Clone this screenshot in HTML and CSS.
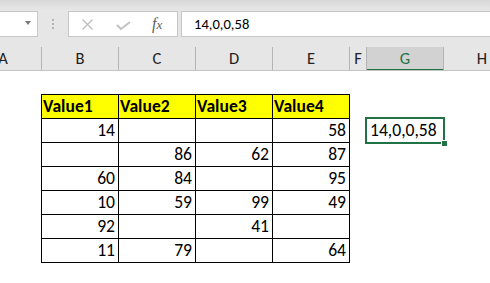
FILE: index.html
```html
<!DOCTYPE html>
<html lang="en">
<head>
  <meta charset="UTF-8">
  <title>Sheet</title>
  <link rel="stylesheet" href="styles.css">
</head>
<body>
  <!-- formula bar -->
  <div class="bar">
    <div class="namebox"><span class="arrow"></span></div>
    <div class="grip"><i></i><i></i><i></i></div>
    <div class="fxbox">
      <svg class="cancel" width="11" height="11" viewBox="0 0 11 11">
        <path d="M0.5 0.5L10.5 10.5M10.5 0.5L0.5 10.5" stroke="#bdbdbd" stroke-width="1.3" fill="none"/>
      </svg>
      <svg class="ok" width="15" height="9" viewBox="0 0 15 9">
        <path d="M1 4L5 8L14 1" stroke="#c2c2c2" stroke-width="2" fill="none"/>
      </svg>
      <span class="fx">f<small>x</small></span>
    </div>
    <div class="formula">14,0,0,58</div>
  </div>

  <!-- column headers -->
  <div class="cols">
    <div class="colrow">
      <div class="col">A</div>
      <div class="col">B</div>
      <div class="col">C</div>
      <div class="col">D</div>
      <div class="col">E</div>
      <div class="col narrow">F</div>
      <div class="col on">G</div>
      <div class="col">H</div>
    </div>
  </div>

  <!-- cells -->
  <div class="sheet">
    <div class="grid">
      <div class="table">
        <div class="c h">Value1</div>
        <div class="c h">Value2</div>
        <div class="c h">Value3</div>
        <div class="c h">Value4</div>

        <div class="c">14</div>
        <div class="c"></div>
        <div class="c"></div>
        <div class="c">58</div>

        <div class="c"></div>
        <div class="c">86</div>
        <div class="c">62</div>
        <div class="c">87</div>

        <div class="c">60</div>
        <div class="c">84</div>
        <div class="c"></div>
        <div class="c">95</div>

        <div class="c">10</div>
        <div class="c">59</div>
        <div class="c">99</div>
        <div class="c">49</div>

        <div class="c">92</div>
        <div class="c"></div>
        <div class="c">41</div>
        <div class="c"></div>

        <div class="c">11</div>
        <div class="c">79</div>
        <div class="c"></div>
        <div class="c">64</div>
      </div>
      <div class="sel">14,0,0,58<span class="handle"></span></div>
    </div>
  </div>
</body>
</html>
```

FILE: styles.css
```css
* {
  box-sizing: border-box;
}

body {
  margin: 0;
  width: 490px;
  height: 283px;
  overflow: hidden;
  background: #fff;
  font-family: Carlito, Lato, "Liberation Sans", sans-serif;
  color: #000;
}

/* formula bar */
.bar {
  display: flex;
  align-items: flex-start;
  height: 46px;
  padding-top: 11px;
  overflow: hidden;
  background: linear-gradient(#d8d8d8, #e6e6e6 10px);
}

.namebox {
  width: 38px;
  height: 26px;
  padding-right: 6px;
  display: flex;
  align-items: center;
  justify-content: flex-end;
  background: #fff;
  border: 1px solid #c6c6c6;
  border-left: 0;
  flex: none;
}

.arrow {
  width: 0;
  height: 0;
  margin-top: -2px;
  border-left: 3.5px solid transparent;
  border-right: 3.5px solid transparent;
  border-top: 4px solid #7a7a7a;
}

.grip {
  display: flex;
  flex-direction: column;
  gap: 2px;
  margin: 8px 0 0 14px;
  flex: none;
}

.grip i {
  width: 2px;
  height: 2px;
  background: #b3b3b3;
}

.fxbox {
  display: flex;
  align-items: center;
  width: 110px;
  height: 26px;
  margin-left: 14px;
  background: #fff;
  border: 1px solid #c6c6c6;
  flex: none;
}

.cancel {
  margin-left: 13px;
}

.ok {
  margin-left: 23px;
  margin-top: 2px;
}

.fx {
  margin-left: 21px;
  font-family: "Liberation Serif", serif;
  font-style: italic;
  font-size: 16px;
  color: #606060;
}

.fx small {
  font-size: 13px;
}

.formula {
  flex: 1;
  height: 26px;
  margin-left: 3px;
  padding-left: 12px;
  background: #fff;
  border: 1px solid #c6c6c6;
  border-right: 0;
  font-size: 14.6px;
  line-height: 24px;
}

/* column headers */
.cols {
  overflow: hidden;
  padding-top: 1px;
  background: #e6e6e6;
  border-bottom: 1px solid #c4c4c4;
}

.colrow {
  display: flex;
  align-items: flex-start;
  height: 23px;
  margin-left: -35px;
}

.col {
  width: 77px;
  height: 23px;
  flex: none;
  border-right: 1px solid #b4b4b4;
  text-align: center;
  line-height: 23px;
  font-size: 16.5px;
  color: #222;
}

.col.narrow {
  width: 17px;
}

.col.on {
  height: 24px;
  background: #d2d2d2;
  border-bottom: 2px solid #217346;
  color: #217346;
  line-height: 22px;
}

/* sheet */
.sheet {
  overflow: hidden;
  height: 212px;
}

.grid {
  display: grid;
  grid-template-columns: repeat(5, 77px) 17px 77px 77px;
  grid-template-rows: 23px repeat(8, 24px);
  margin-left: -36px;
}

.table {
  grid-column: 2 / span 4;
  grid-row: 2 / span 7;
  justify-self: start;
  align-self: start;
  display: grid;
  grid-template-columns: repeat(4, 77px);
  grid-auto-rows: 24px;
  border-left: 1px solid #000;
  border-top: 1px solid #000;
}

.c {
  border-right: 1px solid #000;
  border-bottom: 1px solid #000;
  padding: 0 3px;
  text-align: right;
  font-size: 17.6px;
  line-height: 23px;
}

.h {
  background: #ff0;
  font-weight: bold;
  text-align: left;
  padding-left: 1px;
}

.sel {
  position: relative;
  grid-column: 7;
  grid-row: 3;
  margin: -1px -2px -2px -1px;
  padding-left: 3px;
  border: 2px solid #217346;
  font-size: 17.6px;
  line-height: 22px;
}

.handle {
  position: absolute;
  right: -4px;
  bottom: -4px;
  width: 6px;
  height: 6px;
  background: #217346;
  border: 1px solid #fff;
  border-right: 0;
  border-bottom: 0;
}
```
